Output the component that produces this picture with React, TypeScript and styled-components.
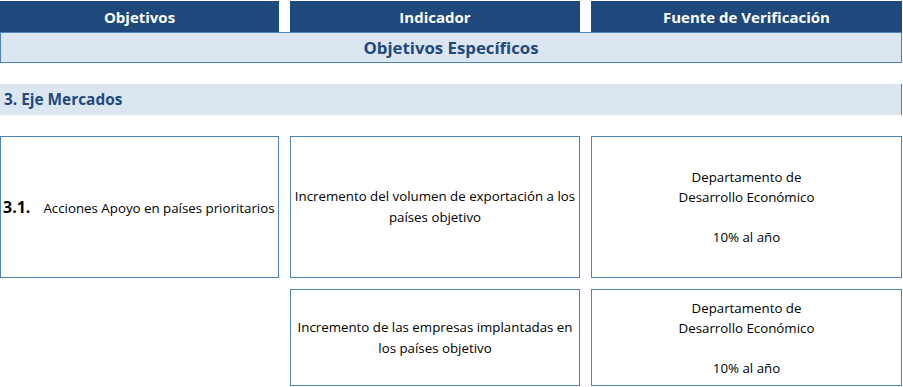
import React from "react";
import styled, { createGlobalStyle } from "styled-components";

const Global = createGlobalStyle`
  html, body { margin: 0; padding: 0; background: #ffffff; }
  body { font-family: "Open Sans", "Liberation Sans", sans-serif; }
`;

const DARK = "#1f497d";
const LIGHT = "#dce6f1";
const BORDER = "#4f81bd";

const Page = styled.div`
  width: 902px;
  padding-top: 1px;
`;

const Columns = styled.div`
  display: grid;
  grid-template-columns: 279px 290px 311px;
  column-gap: 11px;
`;

const HeaderCell = styled.div`
  height: 31px;
  background: ${DARK};
  color: #ffffff;
  font-weight: 700;
  font-size: 15px;
  display: flex;
  align-items: center;
  justify-content: center;
`;

const SubBar = styled.div`
  box-sizing: border-box;
  height: 31px;
  border: 1px solid ${BORDER};
  background: ${LIGHT};
  color: ${DARK};
  font-weight: 700;
  font-size: 16.8px;
  display: flex;
  align-items: center;
  justify-content: center;
`;

const SectionBar = styled.div`
  box-sizing: border-box;
  height: 31px;
  margin-top: 21px;
  padding-left: 4px;
  border-right: 1px solid ${BORDER};
  background: ${LIGHT};
  color: ${DARK};
  font-weight: 700;
  font-size: 15.4px;
  display: flex;
  align-items: center;
`;

const BoxGrid = styled(Columns)`
  margin-top: 21px;
  grid-template-rows: 142px 97px;
  row-gap: 11px;
`;

const Box = styled.div<{ $align?: "left" | "center" }>`
  box-sizing: border-box;
  border: 1px solid ${BORDER};
  display: flex;
  align-items: center;
  justify-content: ${(p) => (p.$align === "left" ? "flex-start" : "center")};
  text-align: center;
  font-size: 13.3px;
  line-height: 20px;
  color: #000;
  padding: 0 2px;
`;

const Empty = styled.div``;

const ObjectiveLine = styled.div`
  display: flex;
  align-items: baseline;
  gap: 13px;
  white-space: nowrap;
`;

const Num = styled.span`
  font-weight: 700;
  font-size: 16px;
`;

const Lines = styled.div<{ $lh?: number }>`
  line-height: ${(p) => p.$lh ?? 20}px;
`;

const Blank = styled.div`
  height: 20px;
`;

const Fuente = () => (
  <Lines>
    <div>Departamento de</div>
    <div>Desarrollo Económico</div>
    <Blank />
    <div>10% al año</div>
  </Lines>
);

export default function App() {
  return (
    <>
      <Global />
      <Page>
        <Columns>
          <HeaderCell>Objetivos</HeaderCell>
          <HeaderCell>Indicador</HeaderCell>
          <HeaderCell>Fuente de Verificación</HeaderCell>
        </Columns>
        <SubBar>Objetivos Específicos</SubBar>
        <SectionBar>3. Eje Mercados</SectionBar>
        <BoxGrid>
          <Box $align="left">
            <ObjectiveLine>
              <Num>3.1.</Num>
              <span>Acciones Apoyo en países prioritarios</span>
            </ObjectiveLine>
          </Box>
          <Box>
            <Lines $lh={21}>
              Incremento del volumen de exportación a los
              <br />
              países objetivo
            </Lines>
          </Box>
          <Box>
            <Fuente />
          </Box>
          <Empty />
          <Box>
            <Lines $lh={21}>
              Incremento de las empresas implantadas en
              <br />
              los países objetivo
            </Lines>
          </Box>
          <Box>
            <Fuente />
          </Box>
        </BoxGrid>
      </Page>
    </>
  );
}
